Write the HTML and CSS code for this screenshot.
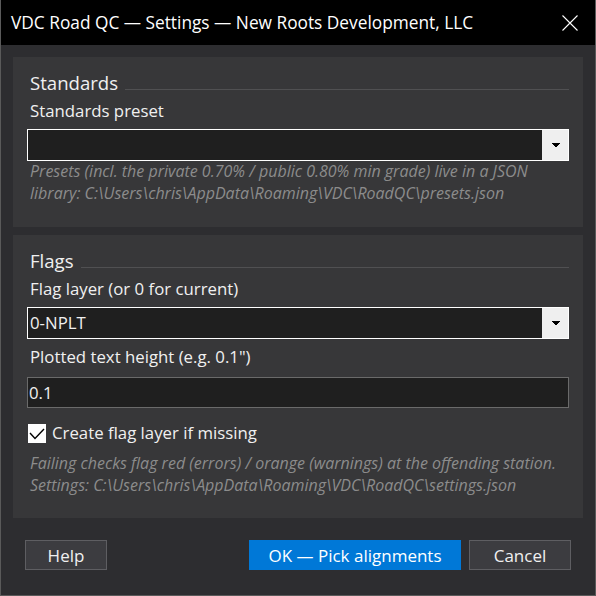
FILE: index.html
```html
<!DOCTYPE html>
<html>
<head>
<meta charset="utf-8">
<link rel="stylesheet" href="styles.css">
</head>
<body>
<div class="window">
  <div class="titlebar">
    <span class="title">VDC Road QC — Settings — New Roots Development, LLC</span>
    <svg class="close" width="16" height="16" viewBox="0 0 16 16"><path d="M0.5 0.5 L15.5 15.5 M15.5 0.5 L0.5 15.5" stroke="#fff" stroke-width="1.1" fill="none"/></svg>
  </div>
  <div class="content">
    <section class="panel panel-standards">
      <div class="heading"><span>Standards</span><div class="rule"></div></div>
      <div class="label">Standards preset</div>
      <div class="combo">
        <div class="combo-text"></div>
        <div class="combo-btn"><svg width="8" height="5" viewBox="0 0 8 5"><path d="M0 0 H8 V1 H7 V2 H6 V3 H5 V4 H3 V3 H2 V2 H1 V1 H0 Z" fill="#000"/></svg></div>
      </div>
      <div class="hint">Presets (incl. the private 0.70% / public 0.80% min grade) live in a JSON<br>library: C:\Users\chris\AppData\Roaming\VDC\RoadQC\presets.json</div>
    </section>
    <section class="panel panel-flags">
      <div class="heading"><span>Flags</span><div class="rule"></div></div>
      <div class="label">Flag layer (or 0 for current)</div>
      <div class="combo">
        <div class="combo-text">0-NPLT</div>
        <div class="combo-btn"><svg width="8" height="5" viewBox="0 0 8 5"><path d="M0 0 H8 V1 H7 V2 H6 V3 H5 V4 H3 V3 H2 V2 H1 V1 H0 Z" fill="#000"/></svg></div>
      </div>
      <div class="label label-gap">Plotted text height (e.g. 0.1")</div>
      <div class="input">0.1</div>
      <div class="check-row">
        <div class="checkbox"><svg width="18" height="18" viewBox="0 0 18 18"><path d="M2 9 L7 14.5 L16 5" stroke="#000" stroke-width="1.4" fill="none"/></svg></div>
        <span>Create flag layer if missing</span>
      </div>
      <div class="hint hint2">Failing checks flag red (errors) / orange (warnings) at the offending station.<br>Settings: C:\Users\chris\AppData\Roaming\VDC\RoadQC\settings.json</div>
    </section>
    <div class="footer">
      <button class="btn btn-help">Help</button>
      <div class="spacer"></div>
      <button class="btn btn-ok">OK — Pick alignments</button>
      <button class="btn btn-cancel">Cancel</button>
    </div>
  </div>
</div>
</body>
</html>
```
FILE: styles.css
```css
html, body {
  margin: 0;
  padding: 0;
  background: #2d2d30;
}
body {
  font-family: "Open Sans", "Noto Sans", sans-serif;
  color: #f0f0f0;
}
.window {
  width: 596px;
  height: 596px;
  box-sizing: border-box;
  border-left: 1px solid #5a5a5a;
  border-right: 1px solid #5a5a5a;
  border-bottom: 1px solid #5a5a5a;
  background: #2d2d30;
  display: flex;
  flex-direction: column;
}
.titlebar {
  height: 45px;
  box-sizing: border-box;
  background: #000;
  display: flex;
  align-items: flex-start;
  padding: 11px 17px 0 10px;
  flex: none;
}
.title {
  font-size: 17.3px;
  line-height: 24px;
  color: #fff;
  flex: 1;
  white-space: nowrap;
}
.close {
  display: block;
  margin-top: 4px;
}
.content {
  padding: 12px 12px 0 12px;
  display: flex;
  flex-direction: column;
}
.panel {
  background: #373739;
  padding: 14px 14px 0 14px;
  box-sizing: border-box;
}
.panel-standards {
  height: 170px;
}
.panel-flags {
  height: 283px;
  margin-top: 8px;
}
.heading {
  display: flex;
  height: 24px;
  font-size: 18.6px;
  line-height: 24px;
  padding-left: 3px;
}
.rule {
  flex: 1;
  height: 1px;
  background: #505052;
  margin-left: 7px;
  margin-top: 18px;
}
.label {
  font-size: 16.8px;
  line-height: 22px;
  padding-left: 3px;
  margin-top: 5px;
  margin-bottom: 7px;
}
.label-gap {
  margin-top: 7px;
  margin-bottom: 9px;
}
.combo {
  height: 32px;
  box-sizing: border-box;
  border: 1px solid #fff;
  background: #1f1f1f;
  display: flex;
}
.combo-text {
  flex: 1;
  font-size: 16.8px;
  line-height: 30px;
  padding-left: 2px;
}
.combo-btn {
  width: 26px;
  background: #efefef;
  display: flex;
  align-items: center;
  justify-content: center;
}
.combo-btn svg {
  display: block;
  margin-left: 1px;
}
.input {
  height: 31px;
  box-sizing: border-box;
  border: 1px solid #6a6a6a;
  background: #1f1f1f;
  font-size: 16.8px;
  line-height: 29px;
  padding-left: 1px;
}
.hint {
  font-size: 16px;
  font-style: italic;
  color: #8c8c8c;
  line-height: 22px;
  padding-left: 3px;
  margin-top: -1px;
  white-space: nowrap;
}
.hint2 {
  margin-top: 8px;
}
.check-row {
  display: flex;
  align-items: center;
  height: 22px;
  margin-top: 14px;
  padding-left: 1px;
  font-size: 16.8px;
  line-height: 22px;
}
.checkbox {
  width: 18px;
  height: 19px;
  background: #fff;
  margin-right: 6px;
}
.checkbox svg {
  display: block;
}
.footer {
  display: flex;
  margin-top: 22px;
  padding: 0 12px 0 12px;
}
.spacer {
  flex: 1;
}
.btn {
  height: 30px;
  box-sizing: border-box;
  font-family: "Open Sans", "Noto Sans", sans-serif;
  font-size: 17px;
  color: #f0f0f0;
  background: #3c3c40;
  border: 1px solid #5e5e62;
  padding: 0;
  margin: 0;
}
.btn-help {
  width: 82px;
}
.btn-ok {
  width: 212px;
  background: #0078d7;
  border-color: #0078d7;
  color: #fff;
}
.btn-cancel {
  width: 102px;
  margin-left: 8px;
}
```
